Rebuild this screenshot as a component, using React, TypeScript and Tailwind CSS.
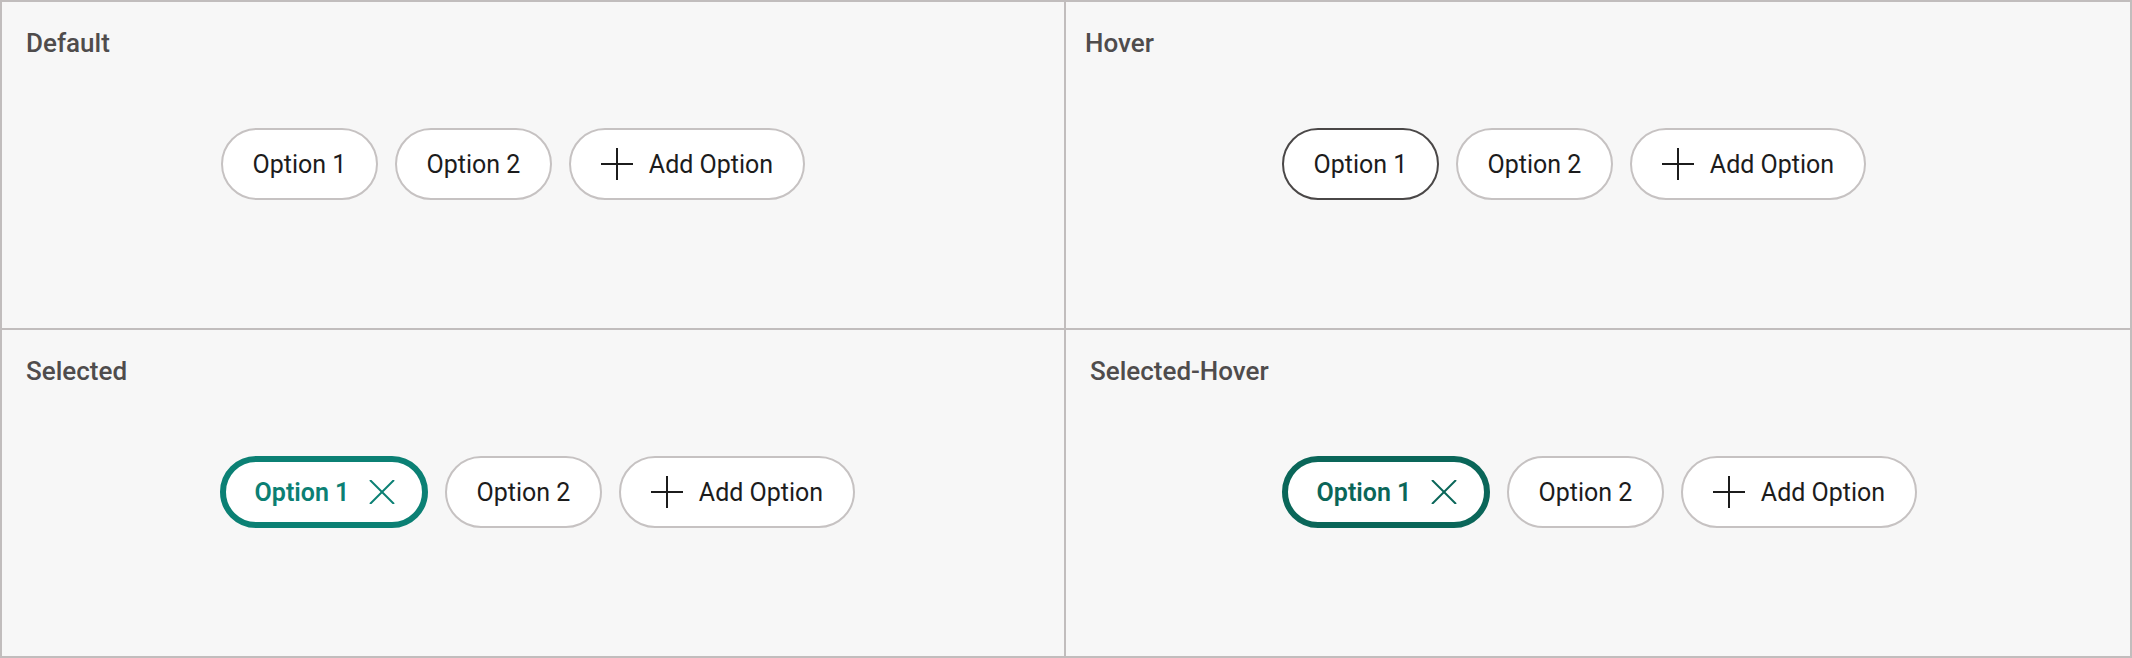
import type { ReactNode } from "react";

type ChipState = "default" | "hover" | "selected" | "selectedHover";

const FONT = { fontFamily: "Roboto, 'Noto Sans', Arial, sans-serif" };

function PlusIcon() {
  return (
    <svg width="32" height="32" viewBox="0 0 32 32" fill="none" stroke="#1c1c1c" strokeWidth="2">
      <line x1="16" y1="0" x2="16" y2="32" />
      <line x1="0" y1="16" x2="32" y2="16" />
    </svg>
  );
}

function CloseIcon({ color }: { color: string }) {
  return (
    <svg width="26" height="24" viewBox="0 0 26 24" fill="none" stroke={color} strokeWidth="2">
      <line x1="1" y1="0" x2="25" y2="24" />
      <line x1="25" y1="0" x2="1" y2="24" />
    </svg>
  );
}

function Chip({ state = "default", width, children }: { state?: ChipState; width: string; children: ReactNode }) {
  const base = "flex h-[72px] shrink-0 items-center justify-center rounded-full bg-white text-[25px] leading-none";
  const look =
    state === "hover"
      ? "border-2 border-[#4a4747] text-[#1c1c1c]"
      : state === "selected"
        ? "border-[6px] border-[#0b8074] font-semibold text-[#0b8074]"
        : state === "selectedHover"
          ? "border-[6px] border-[#0a6659] font-semibold text-[#0a6659]"
          : "border-2 border-[#c6c2c2] text-[#1c1c1c]";
  return <div className={`${base} ${look} ${width}`}>{children}</div>;
}

function ChipRow({ first }: { first: ChipState }) {
  const selected = first === "selected" || first === "selectedHover";
  return (
    <div className="flex items-center gap-[17px]">
      {selected ? (
        <Chip state={first} width="w-[208px]">
          <span className="pl-[2px]">Option 1</span>
          <span className="ml-[20px]">
            <CloseIcon color={first === "selected" ? "#0b8074" : "#0a6659"} />
          </span>
        </Chip>
      ) : (
        <Chip state={first} width="w-[157px]">
          Option 1
        </Chip>
      )}
      <Chip width="w-[157px]">Option 2</Chip>
      <Chip width="w-[236px]">
        <PlusIcon />
        <span className="ml-[16px]">Add Option</span>
      </Chip>
    </div>
  );
}

function Cell({ title, titlePad, rowPad, first }: { title: string; titlePad: string; rowPad: string; first: ChipState }) {
  return (
    <div className="flex flex-col bg-[#f7f7f7] pt-[25px]">
      <div className={`text-[26px] font-medium leading-[32px] text-[#4f4c4c] ${titlePad}`}>{title}</div>
      <div className={`mt-[69px] ${rowPad}`}>
        <ChipRow first={first} />
      </div>
    </div>
  );
}

export default function App() {
  return (
    <div
      className="grid h-[658px] w-[2132px] grid-cols-[1062px_1064px] grid-rows-[326px_326px] gap-[2px] bg-[#c1bdbd] p-[2px]"
      style={FONT}
    >
      <Cell title="Default" titlePad="pl-[24px]" rowPad="pl-[219px]" first="default" />
      <Cell title="Hover" titlePad="pl-[19px]" rowPad="pl-[216px]" first="hover" />
      <Cell title="Selected" titlePad="pl-[24px]" rowPad="pl-[218px]" first="selected" />
      <Cell title="Selected-Hover" titlePad="pl-[24px]" rowPad="pl-[216px]" first="selectedHover" />
    </div>
  );
}
